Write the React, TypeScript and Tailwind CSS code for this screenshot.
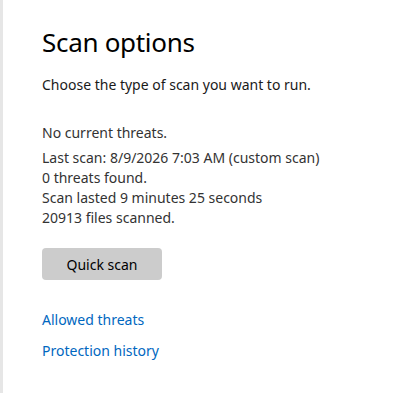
export default function App() {
  return (
    <div
      className="h-[393px] w-[417px] bg-white border-l-[3px] border-[#e6e6e6] pl-[39px] pt-[24px] text-[#1a1a1a]"
      style={{ fontFamily: '"Noto Sans", "Open Sans", sans-serif' }}
    >
      {/* Header */}
      <h1 className="text-[26px] leading-[36px] font-normal tracking-[-0.3px] text-black">Scan options</h1>
      <p className="mt-[15px] text-[14px] leading-[20px]">Choose the type of scan you want to run.</p>

      {/* Status */}
      <div className="mt-[28px] text-[14px] leading-[20px] text-[#333333]">
        <p className="mb-[5px]">No current threats.</p>
        <p>Last scan: 8/9/2026 7:03 AM (custom scan)</p>
        <p>0 threats found.</p>
        <p>Scan lasted 9 minutes 25 seconds</p>
        <p>20913 files scanned.</p>
      </div>

      <button className="mt-[20px] h-[32px] w-[120px] rounded-[4px] bg-[#cccccc] text-[14px] text-black">
        Quick scan
      </button>

      {/* Links */}
      <div className="mt-[30px] flex flex-col items-start gap-[11px] text-[14px] leading-[20px] text-[#0067c0]">
        <a href="#">Allowed threats</a>
        <a href="#">Protection history</a>
      </div>
    </div>
  )
}
